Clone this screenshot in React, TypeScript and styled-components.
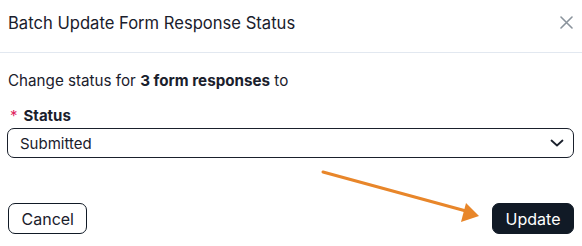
import { FC } from "react";
import styled, { createGlobalStyle } from "styled-components";

const GlobalStyle = createGlobalStyle`
    html, body {
        margin: 0;
        padding: 0;
        background: #ffffff;
    }
    * {
        box-sizing: border-box;
    }
`;

const Dialog = styled.div`
    position: relative;
    width: 582px;
    height: 246px;
    background: #ffffff;
    font-family: Inter, "Noto Sans", sans-serif;
    color: #1a202c;
    overflow: hidden;
`;

const Header = styled.header`
    height: 53px;
    display: flex;
    align-items: center;
    justify-content: space-between;
    padding: 0 9px 7px 8px;
    border-bottom: 1px solid #e2e8f0;
`;

const Title = styled.h2`
    margin: 0;
    font-size: 16.6px;
    font-weight: 400;
    letter-spacing: 0;
`;

const CloseButton = styled.button`
    border: none;
    background: none;
    padding: 0;
    width: 13px;
    height: 13px;
    display: flex;
    color: #8a939c;
    cursor: pointer;
`;

const Body = styled.div`
    padding: 17px 8px 29px 7px;
`;

const Intro = styled.p`
    margin: 0 0 13px 1px;
    font-size: 15.2px;
    line-height: 22px;

    strong {
        font-weight: 700;
    }
`;

const Label = styled.label`
    display: flex;
    align-items: baseline;
    gap: 6px;
    margin: 0 0 1px 3px;
    font-size: 15px;
    line-height: 22px;
    font-weight: 700;
`;

const Required = styled.span`
    color: #e0245e;
    font-weight: 400;
    font-size: 15px;
`;

const Select = styled.div`
    height: 30px;
    display: flex;
    align-items: center;
    justify-content: space-between;
    padding: 0 9px 0 12px;
    border: 1px solid #1a202c;
    border-radius: 7px;
    font-size: 15px;
`;

const Footer = styled.footer`
    display: flex;
    justify-content: space-between;
    padding: 16px 8px 0 8px;
`;

const Button = styled.button<{ $primary?: boolean }>`
    height: 31px;
    padding: 0 12.5px;
    border-radius: 7px;
    border: 1px solid #111a26;
    background: ${(p) => (p.$primary ? "#111a26" : "#ffffff")};
    color: ${(p) => (p.$primary ? "#ffffff" : "#1a202c")};
    font-family: Inter, "Noto Sans", sans-serif;
    font-size: 16px;
    cursor: pointer;
`;

const Arrow = styled.svg`
    position: absolute;
    left: 0;
    top: 0;
    pointer-events: none;
`;

const App: FC = () => {
    return (
        <Dialog>
            <GlobalStyle />
            <Header>
                <Title>Batch Update Form Response Status</Title>
                <CloseButton aria-label="Close">
                    <svg width="13" height="13" viewBox="0 0 13 13">
                        <path d="M1 1 L12 12 M12 1 L1 12" stroke="currentColor" strokeWidth="1.6" strokeLinecap="round" />
                    </svg>
                </CloseButton>
            </Header>
            <Body>
                <Intro>
                    Change status for <strong>3 form responses</strong> to
                </Intro>
                <Label>
                    <Required>*</Required>
                    Status
                </Label>
                <Select>
                    Submitted
                    <svg width="14" height="8" viewBox="0 0 14 8">
                        <path d="M1.5 1.5 L7 6.5 L12.5 1.5" fill="none" stroke="#1a202c" strokeWidth="1.8" strokeLinecap="round" strokeLinejoin="round" />
                    </svg>
                </Select>
            </Body>
            <Footer>
                <Button>Cancel</Button>
                <Button $primary>Update</Button>
            </Footer>
            <Arrow width="582" height="246" viewBox="0 0 582 246">
                <line x1="323" y1="172" x2="466" y2="211" stroke="#e8862a" strokeWidth="3" strokeLinecap="round" />
                <polygon points="479,216 461,222 466,203" fill="#e8862a" />
            </Arrow>
        </Dialog>
    );
};

export default App;
